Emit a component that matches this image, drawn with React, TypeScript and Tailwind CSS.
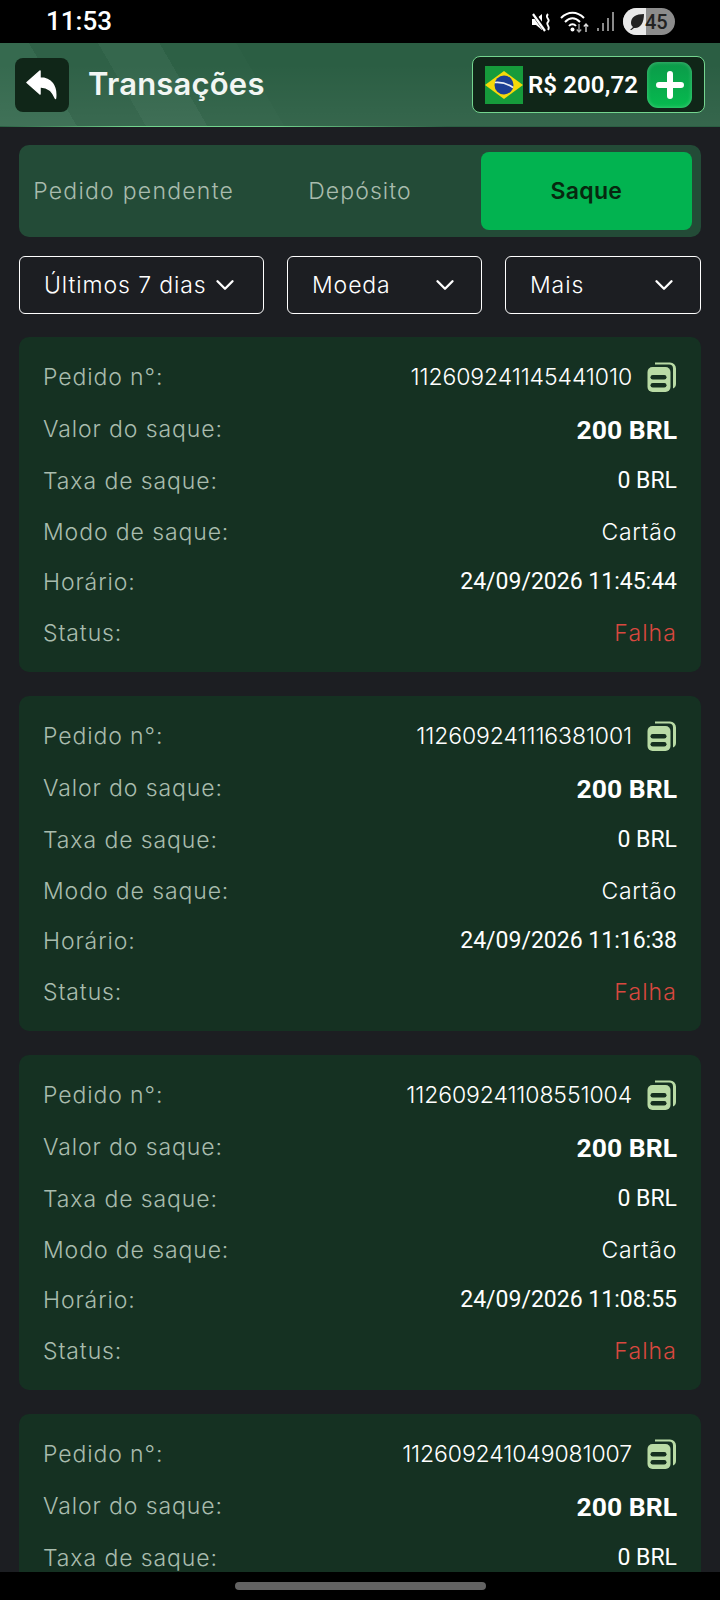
import { ChevronDown } from 'lucide-react';

const orders = [
  { id: '112609241145441010', time: '24/09/2026 11:45:44' },
  { id: '112609241116381001', time: '24/09/2026 11:16:38' },
  { id: '112609241108551004', time: '24/09/2026 11:08:55' },
  { id: '112609241049081007', time: '24/09/2026 10:49:08' },
];

const label = "font-['Inter',sans-serif] text-[23px] font-light tracking-[0.9px] text-[#a9bcae]";
const value = "font-['Roboto',sans-serif] text-[23px] text-white";
const body = "font-['Inter',sans-serif] text-[23px] font-light";

function CopyIcon() {
  return (
    <svg width="30" height="30" viewBox="0 0 30 30" className="ml-[15px]">
      <path d="M8 0.5 H23 a6 6 0 0 1 6 6 V22 a5 5 0 0 1 -3 4.5 V6.5 a4 4 0 0 0 -4 -4 H8 Z" fill="#b9dba5" />
      <rect x="0.5" y="5" width="23" height="25" rx="5" fill="#b9dba5" />
      <rect x="3.5" y="13" width="16" height="4.5" rx="2.2" fill="#15301f" />
      <rect x="3.5" y="21" width="16" height="4.5" rx="2.2" fill="#15301f" />
    </svg>
  );
}

function BrazilFlag() {
  return (
    <svg width="38" height="38" viewBox="0 0 38 38" className="shrink-0">
      <rect width="38" height="38" fill="#169b3b" />
      <path d="M19 5 L38 19 L19 33 L0 19 Z" fill="#f5d90a" />
      <circle cx="19" cy="19" r="9.5" fill="#1c3f94" />
      <path d="M10 16.5 Q19 15.5 28 21.5" stroke="#e9eef5" strokeWidth="1.6" fill="none" />
    </svg>
  );
}

function StatusIcons() {
  return (
    <div className="flex items-center">
      {/* muted speaker */}
      <svg width="22" height="22" viewBox="0 0 22 22" className="mr-[7px]">
        <path d="M1 8 H5 L11 3 V19 L5 14 H1 Z" fill="#fff" />
        <path d="M2 2 L15 20" stroke="#000" strokeWidth="4.5" />
        <path d="M2 3 L14 20" stroke="#fff" strokeWidth="2.2" />
        <path d="M17 3 C13 7 20 8 17 11 C14 14 20 15 17 19" stroke="#fff" strokeWidth="1.8" fill="none" />
      </svg>
      {/* wifi with data arrows */}
      <svg width="31" height="22" viewBox="0 0 31 22" className="mr-[6px]">
        <path d="M1 7 C8 0 17 0 24 7" stroke="#fff" strokeWidth="2" fill="none" />
        <path d="M5 11 C10 6 15 6 20 11" stroke="#fff" strokeWidth="2" fill="none" />
        <path d="M9 15 C11 12.5 14 12.5 16 15" stroke="#fff" strokeWidth="2" fill="none" />
        <circle cx="12.5" cy="18.5" r="2" fill="#fff" />
        <path d="M19 13 V21 M16.8 18.5 L19 21 L21.2 18.5" stroke="#aaa" strokeWidth="1.3" fill="none" />
        <path d="M26 21 V13 M23.8 15.5 L26 13 L28.2 15.5" stroke="#ddd" strokeWidth="1.3" fill="none" />
      </svg>
      {/* signal */}
      <svg width="18" height="21" viewBox="0 0 18 21" className="mr-[8px]">
        <rect x="0" y="17" width="2" height="3" fill="#8a8a8a" />
        <rect x="5" y="12" width="2" height="8" fill="#8a8a8a" />
        <rect x="10" y="7" width="2" height="13" fill="#8a8a8a" />
        <rect x="15" y="1" width="2" height="19" fill="#8a8a8a" />
      </svg>
      {/* battery */}
      <div className="relative flex h-[27px] w-[52px] items-center overflow-hidden rounded-full bg-[#8c8c8c]">
        <div className="h-full w-[23px] bg-[#e8e8e8]" />
        <svg width="18" height="18" viewBox="0 0 18 18" className="absolute left-[5px] top-[5px]">
          <path d="M16 1 C8 1 3 4 3 10 C3 12 4 13 5 14 L2 17 L3.5 17 L6 15 C12 16 16 10 16 1 Z" fill="#222" />
        </svg>
        <span className="absolute left-[22px] font-['Roboto',sans-serif] text-[20px] font-medium text-[#222]">45</span>
      </div>
    </div>
  );
}

function OrderCard({ id, time }: { id: string; time: string }) {
  return (
    <div className="flex h-[335px] shrink-0 flex-col rounded-[10px] bg-[#153122] px-[24px] pb-[12px] pt-[14px]">
      <div className="flex h-[52px] items-center justify-between">
        <span className={label}>Pedido n°:</span>
        <span className="flex items-center">
          <span className="font-['Inter',sans-serif] text-[23px] font-light tracking-[-0.1px] text-white">{id}</span>
          <CopyIcon />
        </span>
      </div>
      <div className="flex h-[53px] items-center justify-between">
        <span className={label}>Valor do saque:</span>
        <span className="font-['Roboto',sans-serif] text-[26.5px] font-bold text-white">200 BRL</span>
      </div>
      <div className="flex h-[51px] items-center justify-between">
        <span className={label}>Taxa de saque:</span>
        <span className={value}>0 BRL</span>
      </div>
      <div className="flex h-[50px] items-center justify-between">
        <span className={label}>Modo de saque:</span>
        <span className={`${body} tracking-[0.7px] text-white`}>Cartão</span>
      </div>
      <div className="flex h-[50px] items-center justify-between">
        <span className={label}>Horário:</span>
        <span className={value}>{time}</span>
      </div>
      <div className="flex h-[52px] items-center justify-between">
        <span className={label}>Status:</span>
        <span className={`${body} tracking-[1.1px] text-[#d9483f]`}>Falha</span>
      </div>
    </div>
  );
}

export default function App() {
  return (
    <div className="flex h-[1600px] w-[720px] flex-col overflow-hidden bg-[#1c1e22]">
      <div className="flex h-[43px] shrink-0 items-center justify-between bg-black pl-[46px] pr-[45px]">
        <span className="font-['Roboto',sans-serif] text-[26px] font-medium text-white">11:53</span>
        <StatusIcons />
      </div>

      <header className="flex h-[83px] shrink-0 items-center justify-between bg-[linear-gradient(to_top,rgba(255,255,255,0.05),rgba(255,255,255,0)_75%),linear-gradient(60deg,#366a4f_0%,#366a4f_10%,#2f6147_10%,#2f6147_19%,#35674d_19%,#35674d_27%,#2d6045_27%,#2d6045_37%,#2b5e43_37%,#2b5e43_100%)] px-[15px]">
        <div className="flex items-center">
          <button className="flex h-[54px] w-[54px] items-center justify-center rounded-[8px] bg-[#102618]">
            <svg width="32" height="30" viewBox="0 0 32 30">
              <path d="M14 1 L1 12.5 L14 24 V17 C21 16.5 26 20 29.5 28.5 C31 16 25 8 14 8 Z" fill="#fff" stroke="#fff" strokeWidth="1.5" strokeLinejoin="round" />
            </svg>
          </button>
          <h1 className="ml-[19px] font-['Inter',sans-serif] text-[31px] font-semibold tracking-[0.2px] text-[#f2f6f3]">Transações</h1>
        </div>
        <div className="flex h-[57px] w-[233px] items-center rounded-[8px] border border-[#74d58f] bg-[#102618] pl-[12px]">
          <BrazilFlag />
          <span className="ml-[5px] font-['Roboto',sans-serif] text-[24px] font-semibold tracking-[0.1px] text-white">R$ 200,72</span>
          <div className="ml-auto mr-[12px] flex h-[46px] w-[45px] items-center justify-center rounded-[11px] bg-[linear-gradient(180deg,#0b9a49,#06bb4f)] shadow-[inset_0_0_4px_rgba(255,255,255,0.3)]">
            <svg width="28" height="28" viewBox="0 0 28 28">
              <path d="M14 3 V25 M3 14 H25" stroke="#fff" strokeWidth="6" strokeLinecap="round" />
            </svg>
          </div>
        </div>
      </header>
      <div className="h-px shrink-0 bg-[linear-gradient(90deg,#2b5e43_0%,#74d58f_18%,#74d58f_38%,#2b5e43_62%)]" />

      <main className="flex min-h-0 flex-1 flex-col overflow-hidden px-[19px] pt-[18px]">
        <div className="grid h-[92px] shrink-0 grid-cols-3 gap-[15px] rounded-[10px] bg-[#234b37] px-[9px] py-[7px]">
          <div className="flex items-center justify-center">
            <span className={`${body} whitespace-nowrap tracking-[1.25px] text-[#a9bcae]`}>Pedido pendente</span>
          </div>
          <div className="flex items-center justify-center">
            <span className={`${body} tracking-[1.1px] text-[#a9bcae]`}>Depósito</span>
          </div>
          <div className="flex items-center justify-center rounded-[8px] bg-[#02b350]">
            <span className="font-['Inter',sans-serif] text-[23px] font-semibold tracking-[0.3px] text-[#07280f]">Saque</span>
          </div>
        </div>

        <div className="mt-[19px] flex h-[58px] shrink-0 justify-between">
          <div className="flex w-[245px] items-center justify-between rounded-[6px] border border-white pl-[24px] pr-[23px]">
            <span className={`${body} whitespace-nowrap tracking-[0.9px] text-white`}>Últimos 7 dias</span>
            <ChevronDown size={30} color="#fff" strokeWidth={1.9} className="shrink-0" />
          </div>
          <div className="flex w-[195px] items-center justify-between rounded-[6px] border border-white pl-[24px] pr-[21px]">
            <span className={`${body} tracking-[0.9px] text-white`}>Moeda</span>
            <ChevronDown size={30} color="#fff" strokeWidth={1.9} className="shrink-0" />
          </div>
          <div className="flex w-[196px] items-center justify-between rounded-[6px] border border-white pl-[24px] pr-[21px]">
            <span className={`${body} tracking-[0.9px] text-white`}>Mais</span>
            <ChevronDown size={30} color="#fff" strokeWidth={1.9} className="shrink-0" />
          </div>
        </div>

        <div className="mt-[23px] flex flex-col gap-[24px]">
          {orders.map((o) => (
            <OrderCard key={o.id} id={o.id} time={o.time} />
          ))}
        </div>
      </main>

      <div className="flex h-[28px] shrink-0 items-center justify-center bg-black">
        <div className="h-[8px] w-[251px] rounded-full bg-[#636363]" />
      </div>
    </div>
  );
}
